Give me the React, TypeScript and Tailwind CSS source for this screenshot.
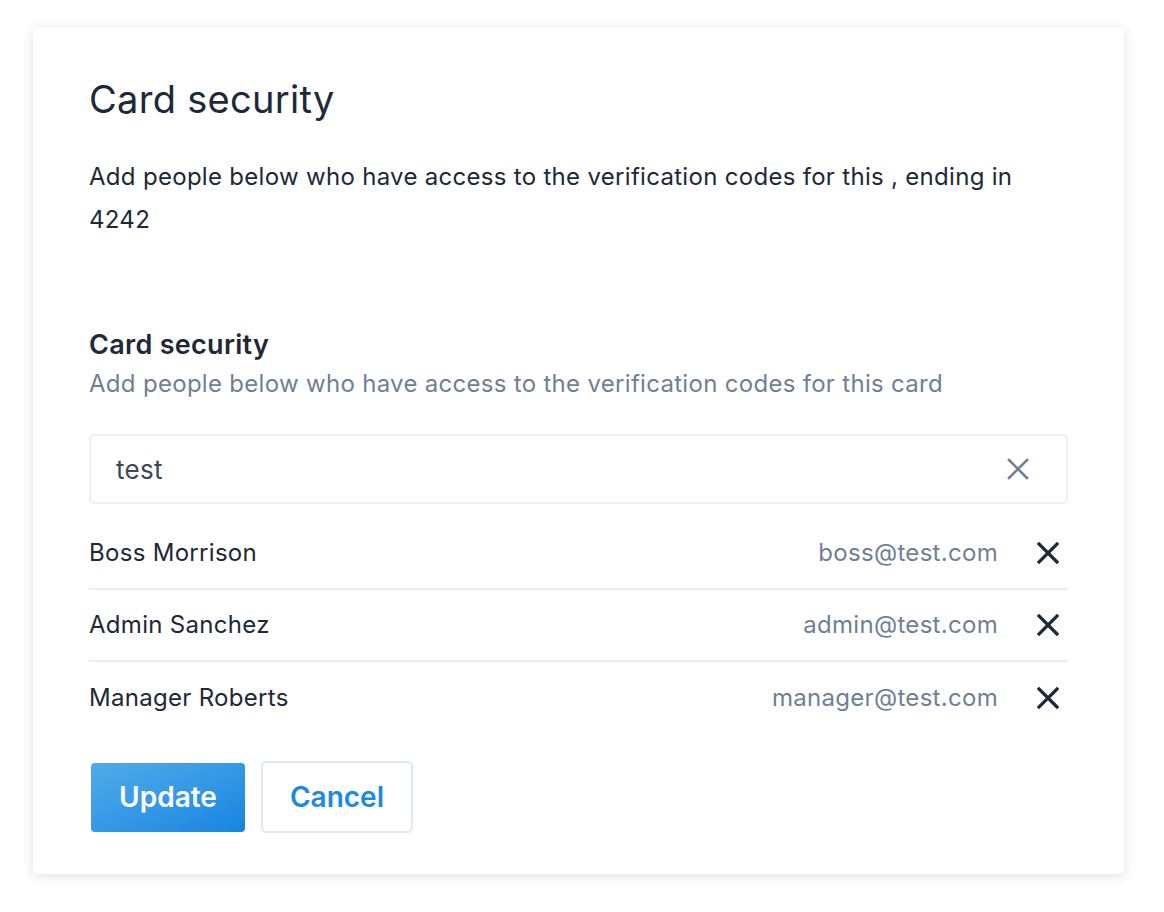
const people = [
  { name: "Boss Morrison", email: "boss@test.com" },
  { name: "Admin Sanchez", email: "admin@test.com" },
  { name: "Manager Roberts", email: "manager@test.com" },
];

function Cross({ className, stroke = 3 }: { className?: string; stroke?: number }) {
  return (
    <svg viewBox="0 0 22 22" className={className} fill="none">
      <path d="M2 2L20 20M20 2L2 20" stroke="currentColor" strokeWidth={stroke} strokeLinecap="square" />
    </svg>
  );
}

export default function App() {
  return (
    <div
      className="min-h-[912px] bg-white pt-[28px] pl-[33px] tracking-[0.3px]"
      style={{ fontFamily: "Inter, 'Noto Sans', sans-serif" }}
    >
      <div className="w-[1091px] h-[846px] rounded-[5px] bg-white shadow-[0_2px_12px_rgba(30,40,60,0.14)] px-[56px] pt-[47px]">
        {/* Header */}
        <h1 className="text-[38px] leading-[48px] font-normal text-[#1d2838]">
          Card security
        </h1>
        <p className="mt-[32px] text-[24px] leading-[43px] text-[#1d2838]">
          Add people below who have access to the verification codes for this , ending in 4242
        </p>

        {/* Section */}
        <h2 className="mt-[87px] text-[27px] leading-[34px] font-semibold text-[#1d2838]">
          Card security
        </h2>
        <p className="mt-[6px] text-[24px] leading-[32px] text-[#6f7f96]">
          Add people below who have access to the verification codes for this card
        </p>

        <div className="mt-[34px] h-[70px] border-2 border-[#eceff3] rounded-[5px] flex items-center pl-[25px] pr-[37px]">
          <span className="flex-1 text-[26px] text-[#3d4759]">test</span>
          <Cross className="w-[22px] h-[22px] text-[#6f7f96]" stroke={2.6} />
        </div>

        <div className="mt-[14px]">
          {people.map((p, i) => (
            <div
              key={p.email}
              className={`h-[72px] flex items-center ${
                i < people.length - 1 ? "border-b-2 border-[#eceef1]" : ""
              }`}
            >
              <span className="flex-1 text-[24px] text-[#1d2838]">{p.name}</span>
              <span className="text-[24px] text-[#6f7f96]">{p.email}</span>
              <Cross className="ml-[39px] mr-[9px] w-[22px] h-[22px] text-[#1d2838]" stroke={3.2} />
            </div>
          ))}
        </div>

        {/* Actions */}
        <div className="mt-[27px] flex items-center gap-[16px]">
          <button className="ml-[2px] w-[154px] h-[69px] rounded-[4px] bg-gradient-to-br from-[#4eacea] to-[#1585e0] text-white text-[28px] font-semibold tracking-normal">
            Update
          </button>
          <button className="w-[152px] h-[72px] rounded-[5px] border-2 border-[#e2e8f1] bg-white text-[#1b8ae2] text-[28px] font-semibold tracking-normal">
            Cancel
          </button>
        </div>
      </div>
    </div>
  );
}
